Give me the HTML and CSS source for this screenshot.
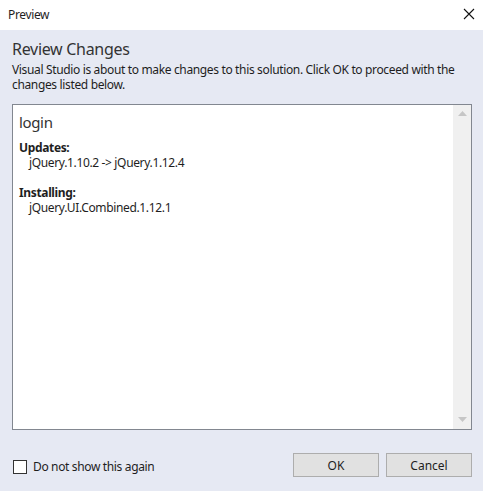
FILE: index.html
```html
<!DOCTYPE html>
<html lang="en">
<head>
  <meta charset="UTF-8">
  <meta name="viewport" content="width=device-width, initial-scale=1.0">
  <title>Preview</title>
  <link rel="stylesheet" href="styles.css">
</head>
<body>

<div class="window">
  <div class="titlebar">
    <span class="title">Preview</span>
    <svg class="close" width="12" height="12" viewBox="0 0 12 12">
      <path d="M1 1 L11 11 M11 1 L1 11" stroke="#111" stroke-width="1.1" fill="none"/>
    </svg>
  </div>

  <div class="content">
    <h1 class="heading">Review Changes</h1>
    <p class="desc">Visual Studio is about to make changes to this solution. Click OK to proceed with the changes listed below.</p>

    <div class="changes">
      <div class="changes-text">
        <div class="project">login</div>
        <div class="group">
          <div class="group-title">Updates:</div>
          <div class="item">jQuery.1.10.2 -&gt; jQuery.1.12.4</div>
        </div>
        <div class="group">
          <div class="group-title">Installing:</div>
          <div class="item">jQuery.UI.Combined.1.12.1</div>
        </div>
      </div>
      <div class="scrollbar">
        <svg width="9" height="5" viewBox="0 0 9 5"><path d="M0 5 L4.5 0 L9 5 Z" fill="#c6c6c6"/></svg>
        <svg width="9" height="5" viewBox="0 0 9 5"><path d="M0 0 L4.5 5 L9 0 Z" fill="#c6c6c6"/></svg>
      </div>
    </div>

    <div class="footer">
      <label class="check">
        <span class="box"></span>
        Do not show this again
      </label>
      <div class="buttons">
        <button class="btn">OK</button>
        <button class="btn">Cancel</button>
      </div>
    </div>
  </div>
</div>

</body>
</html>
```

FILE: styles.css
```css
body {
  margin: 0;
  font-family: 'Noto Sans', sans-serif;
  font-size: 12px;
  letter-spacing: -0.35px;
  color: #1e1e1e;
  background: #e6e9f3;
}

.window {
  width: 483px;
  height: 491px;
  display: flex;
  flex-direction: column;
}

.titlebar {
  height: 30px;
  background: #fff;
  display: flex;
  align-items: center;
  justify-content: space-between;
  padding: 0 8px 0 8px;
}

.title {
  font-size: 12px;
  margin-top: -1px;
}

.close {
  margin-top: -2px;
}

.content {
  flex: 1;
  display: flex;
  flex-direction: column;
  padding: 0 11px 0 12px;
}

.heading {
  font-size: 16px;
  font-weight: normal;
  letter-spacing: -0.3px;
  color: #333;
  margin: 8px 0 0 0;
  line-height: 22px;
}

.desc {
  margin: 2px 0 0 0;
  line-height: 15px;
}

.changes {
  margin-top: 12px;
  height: 324px;
  border: 1px solid #828790;
  background: #fff;
  display: flex;
}

.changes-text {
  flex: 1;
  padding: 6px 6px;
}

.project {
  font-size: 15px;
  line-height: 22px;
  color: #333;
}

.group {
  margin-top: 7px;
  margin-bottom: 14px;
}

.group-title {
  font-weight: bold;
  line-height: 15px;
}

.item {
  padding-left: 10px;
  line-height: 16px;
}

.scrollbar {
  width: 18px;
  background: #f0f0f0;
  display: flex;
  flex-direction: column;
  justify-content: space-between;
  align-items: center;
  padding: 6px 0 7px 0;
}

.footer {
  flex: 1;
  display: flex;
  align-items: flex-start;
  justify-content: space-between;
  padding-top: 23px;
}

.check {
  display: flex;
  align-items: center;
  gap: 6px;
  margin-left: 1px;
  margin-top: 5px;
}

.box {
  width: 12px;
  height: 12px;
  border: 1px solid #333;
  background: #fff;
}

.buttons {
  display: flex;
  gap: 7px;
}

.btn {
  width: 86px;
  height: 24px;
  font-family: 'Noto Sans', sans-serif;
  font-size: 12px;
  color: #1e1e1e;
  background: #e1e1e1;
  border: 1px solid #adadad;
}
```
